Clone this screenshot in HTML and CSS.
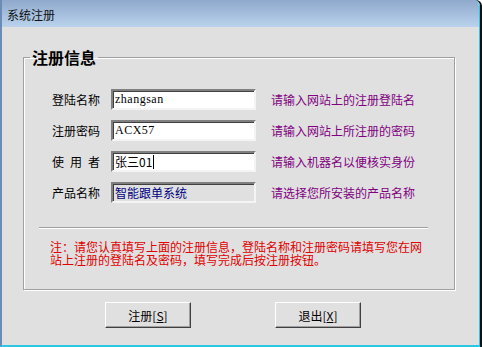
FILE: index.html
```html
<!DOCTYPE html>
<html lang="zh-CN">
  <head>
    <meta charset="UTF-8" />
    <title>系统注册</title>
    <link rel="stylesheet" href="styles.css">
  </head>
  <body>
    <div class="window">
      <div class="titlebar">系统注册</div>

      <div class="content">
        <fieldset class="group">
          <legend>注册信息</legend>

          <div class="rows">
            <div class="label">登陆名称</div>
            <div class="field latin">zhangsan</div>
            <div class="hint">请输入网站上的注册登陆名</div>

            <div class="label">注册密码</div>
            <div class="field latin">ACX57</div>
            <div class="hint">请输入网站上所注册的密码</div>

            <div class="label spaced">使用者</div>
            <div class="field">张三01<span class="caret"></span></div>
            <div class="hint">请输入机器名以便核实身份</div>

            <div class="label">产品名称</div>
            <div class="field disabled">智能跟单系统</div>
            <div class="hint">请选择您所安装的产品名称</div>
          </div>

          <div class="separator"></div>

          <p class="note">注：请您认真填写上面的注册信息，登陆名称和注册密码请填写您在网站上注册的登陆名及密码，填写完成后按注册按钮。</p>
        </fieldset>

        <div class="buttons">
          <button class="btn">注册[<u>S</u>]</button>
          <button class="btn">退出[<u>X</u>]</button>
        </div>
      </div>
    </div>
  </body>
</html>
```

FILE: styles.css
```css
body {
  margin: 0;
  background: #fff;
  font-family: "Noto Sans CJK SC", "Liberation Sans", sans-serif;
  font-size: 12px;
}

.window {
  width: 480px;
  height: 347px;
  box-sizing: border-box;
  display: flex;
  flex-direction: column;
  border-left: 2px solid #6d8cb5;
  border-right: 1px solid #2cc6e6;
  border-bottom: 2px solid #2cc6e6;
  border-top-right-radius: 6px;
  box-shadow: 2px 0 0 #111;
  overflow: hidden;
}

.titlebar {
  height: 27px;
  padding-left: 5px;
  line-height: 30px;
  color: #111;
  background-image: linear-gradient(#8fa9cc, #bad2ec);
}

.content {
  flex: 1;
  display: flex;
  flex-direction: column;
  padding: 20px 24px 0 21px;
  background: #e0e0e0;
}

.group {
  margin: 0;
  padding: 0 0 23px 6px;
  border: 1px solid #a0a0a0;
  box-shadow: 1px 1px 0 #fff, inset 1px 1px 0 #fff;
}

.group legend {
  padding: 0 2px;
  font-size: 16px;
  font-weight: bold;
  line-height: 20px;
  color: #000;
}

.rows {
  display: grid;
  grid-template-columns: 48px 145px 1fr;
  grid-auto-rows: 21px;
  column-gap: 11px;
  row-gap: 10px;
  align-items: center;
  margin-top: 22px;
  padding-left: 22px;
}

.label {
  color: #000;
  white-space: nowrap;
}

.label.spaced {
  letter-spacing: 6px;
}

.field {
  height: 21px;
  box-sizing: border-box;
  padding: 0 2px;
  display: flex;
  align-items: center;
  background: #fff;
  border: 2px solid;
  border-color: #808080 #f4f4f4 #f4f4f4 #808080;
  box-shadow: inset 1px 1px 0 #404040;
  font-size: 12px;
  white-space: nowrap;
}

.field.latin {
  font-family: "Liberation Serif", serif;
  font-size: 12px;
  letter-spacing: 0.5px;
}

.field.disabled {
  background: #e0e0e0;
  color: #000080;
}

.caret {
  display: inline-block;
  width: 1px;
  height: 14px;
  margin-left: 1px;
  background: #000;
}

.hint {
  margin-left: 4px;
  color: #800080;
  white-space: nowrap;
}

.separator {
  width: 389px;
  height: 1px;
  margin: 24px 0 0 9px;
  background: #a0a0a0;
  border-bottom: 1px solid #fff;
}

.note {
  width: 374px;
  margin: 11px 0 0 20px;
  line-height: 13px;
  color: #e00000;
}

.buttons {
  display: flex;
  gap: 84px;
  margin-top: 12px;
  padding-left: 82px;
}

.btn {
  width: 86px;
  height: 26px;
  padding: 0;
  font-family: inherit;
  font-size: 12px;
  color: #000;
  background: #e0e0e0;
  border: 1px solid;
  border-color: #fff #404040 #404040 #fff;
  box-shadow: inset -1px -1px 0 #a0a0a0;
}
```
